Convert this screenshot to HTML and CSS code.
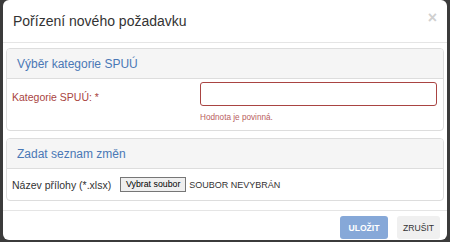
FILE: index.html
```html
<!DOCTYPE html>
<html lang="cs">
<head>
    <meta charset="UTF-8">
    <title>Pořízení nového požadavku</title>
    <link rel="stylesheet" href="styles.css">
</head>
<body>
    <div class="modal">
        <div class="modal-header">
            <h4 class="modal-title">Pořízení nového požadavku</h4>
            <span class="close">&times;</span>
        </div>
        <div class="modal-body">
            <div class="panel">
                <div class="panel-heading">Výběr kategorie SPUÚ</div>
                <div class="panel-body row-required">
                    <label class="label-error">Kategorie SPUÚ: *</label>
                    <div class="field">
                        <input type="text" class="input-error">
                        <div class="help-error">Hodnota je povinná.</div>
                    </div>
                </div>
            </div>
            <div class="panel">
                <div class="panel-heading">Zadat seznam změn</div>
                <div class="panel-body row-file">
                    <label>Název přílohy (*.xlsx)</label>
                    <button class="file-button">Vybrat soubor</button>
                    <span class="file-name">SOUBOR NEVYBRÁN</span>
                </div>
            </div>
        </div>
        <div class="modal-footer">
            <button class="btn btn-primary" disabled>ULOŽIT</button>
            <button class="btn btn-default">ZRUŠIT</button>
        </div>
    </div>
</body>
</html>
```

FILE: styles.css
```css
body {
    font-family: 'Liberation Sans', Arial, sans-serif;
    background-color: #3b3b3b;
    margin: 0;
    padding: 0;
    color: #333;
}

.modal {
    margin: 0 3px;
    height: 240px;
    background-color: #fff;
    border-radius: 6px;
    box-sizing: border-box;
}

.modal-header {
    height: 43px;
    box-sizing: border-box;
    border-bottom: 1px solid #e5e5e5;
    display: flex;
    align-items: center;
    justify-content: space-between;
    padding: 0 10px 0 10px;
}

.modal-title {
    margin: 0;
    font-size: 14px;
    font-weight: normal;
    color: #333;
}

.close {
    font-size: 16px;
    font-weight: bold;
    color: #d0d0d0;
    margin-top: -6px;
}

.modal-body {
    padding: 5px 3px 0 3px;
    display: flex;
    flex-direction: column;
    gap: 7px;
}

.panel {
    border: 1px solid #ddd;
    border-radius: 4px;
}

.panel-heading {
    height: 29px;
    background-color: #f5f5f5;
    border-bottom: 1px solid #ddd;
    border-radius: 3px 3px 0 0;
    color: #4a78b5;
    font-size: 12px;
    line-height: 30px;
    padding-left: 10px;
}

.panel-body {
    font-size: 10.5px;
}

.row-required {
    display: flex;
    height: 51px;
    padding: 3px 6px 0 5px;
    box-sizing: border-box;
}

.row-required label {
    width: 188px;
    padding-top: 9px;
}

.label-error {
    color: #a94442;
}

.field {
    flex: 1;
}

.input-error {
    display: block;
    width: 100%;
    height: 24px;
    box-sizing: border-box;
    border: 1px solid #a94442;
    border-radius: 3px;
    margin: 0;
}

.help-error {
    color: #b96060;
    font-size: 8.2px;
    margin-top: 7px;
}

.row-file {
    display: flex;
    align-items: center;
    height: 31px;
    padding: 0 5px;
}

.file-button {
    font-family: 'Liberation Sans', Arial, sans-serif;
    font-size: 8.8px;
    height: 15px;
    width: 66px;
    padding: 0;
    margin: 0 3px 0 9px;
    border: 1px solid #767676;
    border-radius: 0;
    background-color: #efefef;
    color: #000;
    line-height: 13px;
}

.file-name {
    font-size: 9px;
}

.modal-footer {
    margin-top: 9px;
    border-top: 1px solid #e5e5e5;
    display: flex;
    justify-content: flex-end;
    gap: 9px;
    padding: 5px 7px 0 0;
}

.btn {
    font-family: 'Liberation Sans', Arial, sans-serif;
    font-size: 8.6px;
    height: 23px;
    border: none;
    border-radius: 3px;
    padding: 0;
}

.btn-primary {
    background-color: #86a8d8;
    color: #fff;
    font-weight: bold;
    width: 48px;
}

.btn-default {
    background-color: #f0f0f0;
    color: #333;
    width: 43px;
}
```
